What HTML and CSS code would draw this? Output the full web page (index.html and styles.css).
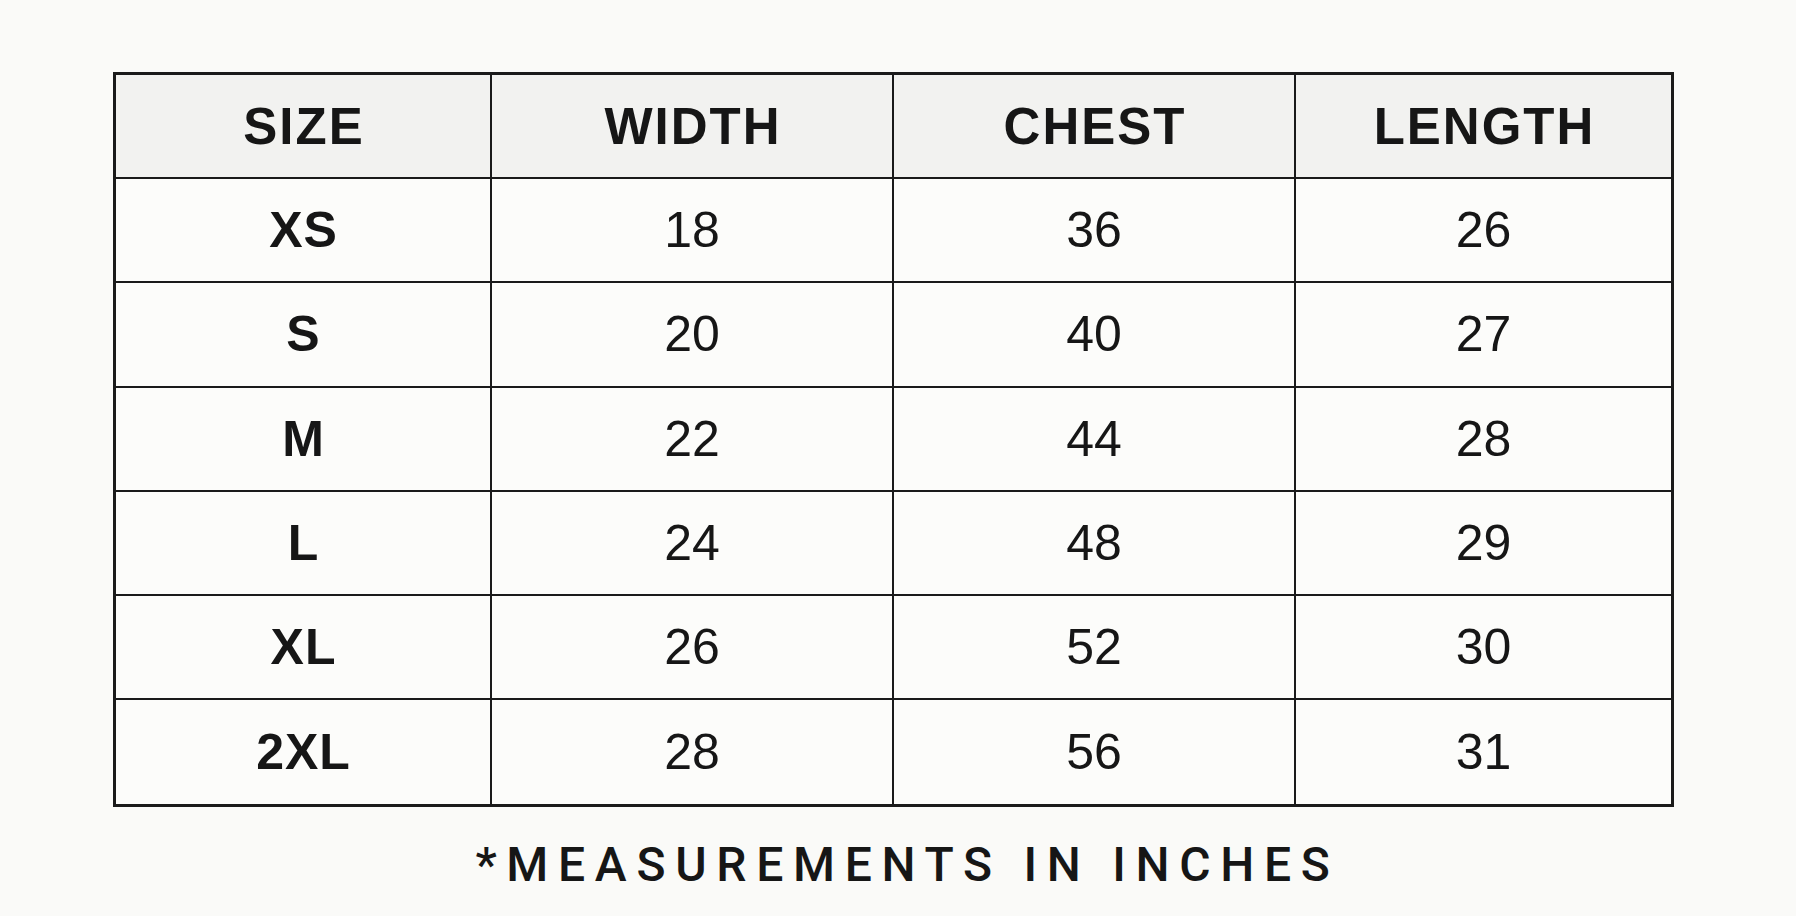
FILE: index.html
```html
<!DOCTYPE html>
<html lang="en">
<head>
<meta charset="utf-8">
<title>Size Chart</title>
<link rel="stylesheet" href="styles.css">
</head>
<body>
<main class="page">
  <div class="chart">
    <div class="row head">
      <div class="cell">SIZE</div>
      <div class="cell">WIDTH</div>
      <div class="cell">CHEST</div>
      <div class="cell">LENGTH</div>
    </div>
    <div class="row">
      <div class="cell size">XS</div><div class="cell">18</div><div class="cell">36</div><div class="cell">26</div>
    </div>
    <div class="row">
      <div class="cell size">S</div><div class="cell">20</div><div class="cell">40</div><div class="cell">27</div>
    </div>
    <div class="row">
      <div class="cell size">M</div><div class="cell">22</div><div class="cell">44</div><div class="cell">28</div>
    </div>
    <div class="row">
      <div class="cell size">L</div><div class="cell">24</div><div class="cell">48</div><div class="cell">29</div>
    </div>
    <div class="row">
      <div class="cell size">XL</div><div class="cell">26</div><div class="cell">52</div><div class="cell">30</div>
    </div>
    <div class="row">
      <div class="cell size">2XL</div><div class="cell">28</div><div class="cell">56</div><div class="cell">31</div>
    </div>
  </div>
  <p class="note">*MEASUREMENTS IN INCHES</p>
</main>
</body>
</html>
```
FILE: styles.css
```css
html, body {
  margin: 0;
  padding: 0;
  background: #fafaf8;
}

.page {
  width: 1796px;
  height: 916px;
  box-sizing: border-box;
  padding: 72px 0 0 113px;
  overflow: hidden;
}

.chart {
  width: 1561px;
  box-sizing: border-box;
  border: 3px solid #1a1a1a;
  background: #fcfcfa;
}

.row {
  display: grid;
  grid-template-columns: 376px 402px 402px 1fr;
  height: 104.3px;
  border-bottom: 2px solid #1a1a1a;
  box-sizing: border-box;
}

.row:last-child {
  border-bottom: none;
  height: 103.3px;
}

.row.head {
  height: 104px;
  background: #f2f2f0;
}

.cell {
  display: flex;
  align-items: center;
  justify-content: center;
  border-right: 2px solid #1a1a1a;
  font-family: "Liberation Sans", Arial, sans-serif;
  font-size: 50px;
  color: #161616;
}

.cell:last-child {
  border-right: none;
}

.head .cell {
  font-weight: bold;
  font-size: 51px;
  letter-spacing: 2px;
  padding-left: 2px;
}

.cell.size {
  font-weight: bold;
  letter-spacing: 1px;
  padding-left: 1px;
}

.note {
  margin: 34px 0 0 0;
  width: 1561px;
  text-align: center;
  font-family: Roboto, "Liberation Sans", sans-serif;
  font-weight: 500;
  font-size: 48px;
  line-height: 48px;
  letter-spacing: 9.7px;
  padding-left: 28px;
  box-sizing: border-box;
  color: #161616;
}
```
